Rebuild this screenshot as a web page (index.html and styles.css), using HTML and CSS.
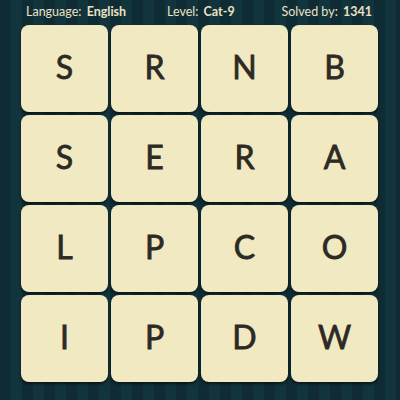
FILE: index.html
```html
<!DOCTYPE html>
<html lang="en">
<head>
    <meta charset="UTF-8">
    <meta name="viewport" content="width=device-width, initial-scale=1.0">
    <title>Word Puzzle</title>
    <link rel="stylesheet" href="styles.css">
</head>
<body>
    <div class="board">
        <div class="board-header">
            <span class="info info-left">Language: <b>English</b></span>
            <span class="info info-mid">Level: <b>Cat-9</b></span>
            <span class="info info-right">Solved by: <b>1341</b></span>
        </div>

        <div class="tiles">
            <div class="tile">S</div>
            <div class="tile">R</div>
            <div class="tile">N</div>
            <div class="tile">B</div>
            <div class="tile">S</div>
            <div class="tile">E</div>
            <div class="tile">R</div>
            <div class="tile">A</div>
            <div class="tile">L</div>
            <div class="tile">P</div>
            <div class="tile">C</div>
            <div class="tile">O</div>
            <div class="tile">I</div>
            <div class="tile">P</div>
            <div class="tile">D</div>
            <div class="tile">W</div>
        </div>
    </div>
</body>
</html>
```

FILE: styles.css
```css
:root {
    --bg-dark: #0f2c34;
    --bg-light: #12343c;
    --tile: #f1e9c2;
    --letter: #2d2924;
    --text: #e9e2c4;
}

* {
    margin: 0;
    padding: 0;
    box-sizing: border-box;
}

body {
    width: 400px;
    height: 400px;
    overflow: hidden;
    font-family: Lato, "Open Sans", sans-serif;
    background-color: var(--bg-dark);
    background-image: repeating-linear-gradient(90deg,
        var(--bg-dark) 0px, var(--bg-dark) 11px,
        var(--bg-light) 11px, var(--bg-light) 22px);
}

.board {
    display: flex;
    flex-direction: column;
    padding: 0 22px 0 21px;
}

.board-header {
    display: flex;
    justify-content: space-between;
    align-items: center;
    height: 25px;
    padding: 0 6px 3px 5px;
}

.info {
    color: var(--text);
    font-size: 12.5px;
}

.info b {
    font-weight: 700;
    margin-left: 2px;
}

.info-mid {
    margin-right: 6px;
}

.tiles {
    display: grid;
    grid-template-columns: repeat(4, 87px);
    grid-auto-rows: 87px;
    gap: 3px;
}

.tile {
    background: var(--tile);
    border-radius: 8px;
    box-shadow: 0 2px 3px rgba(0, 0, 0, 0.55);
    display: flex;
    align-items: center;
    justify-content: center;
    padding-bottom: 5px;
    color: var(--letter);
    font-size: 32px;
    font-weight: 400;
    -webkit-text-stroke: 0.8px var(--letter);
}
```
